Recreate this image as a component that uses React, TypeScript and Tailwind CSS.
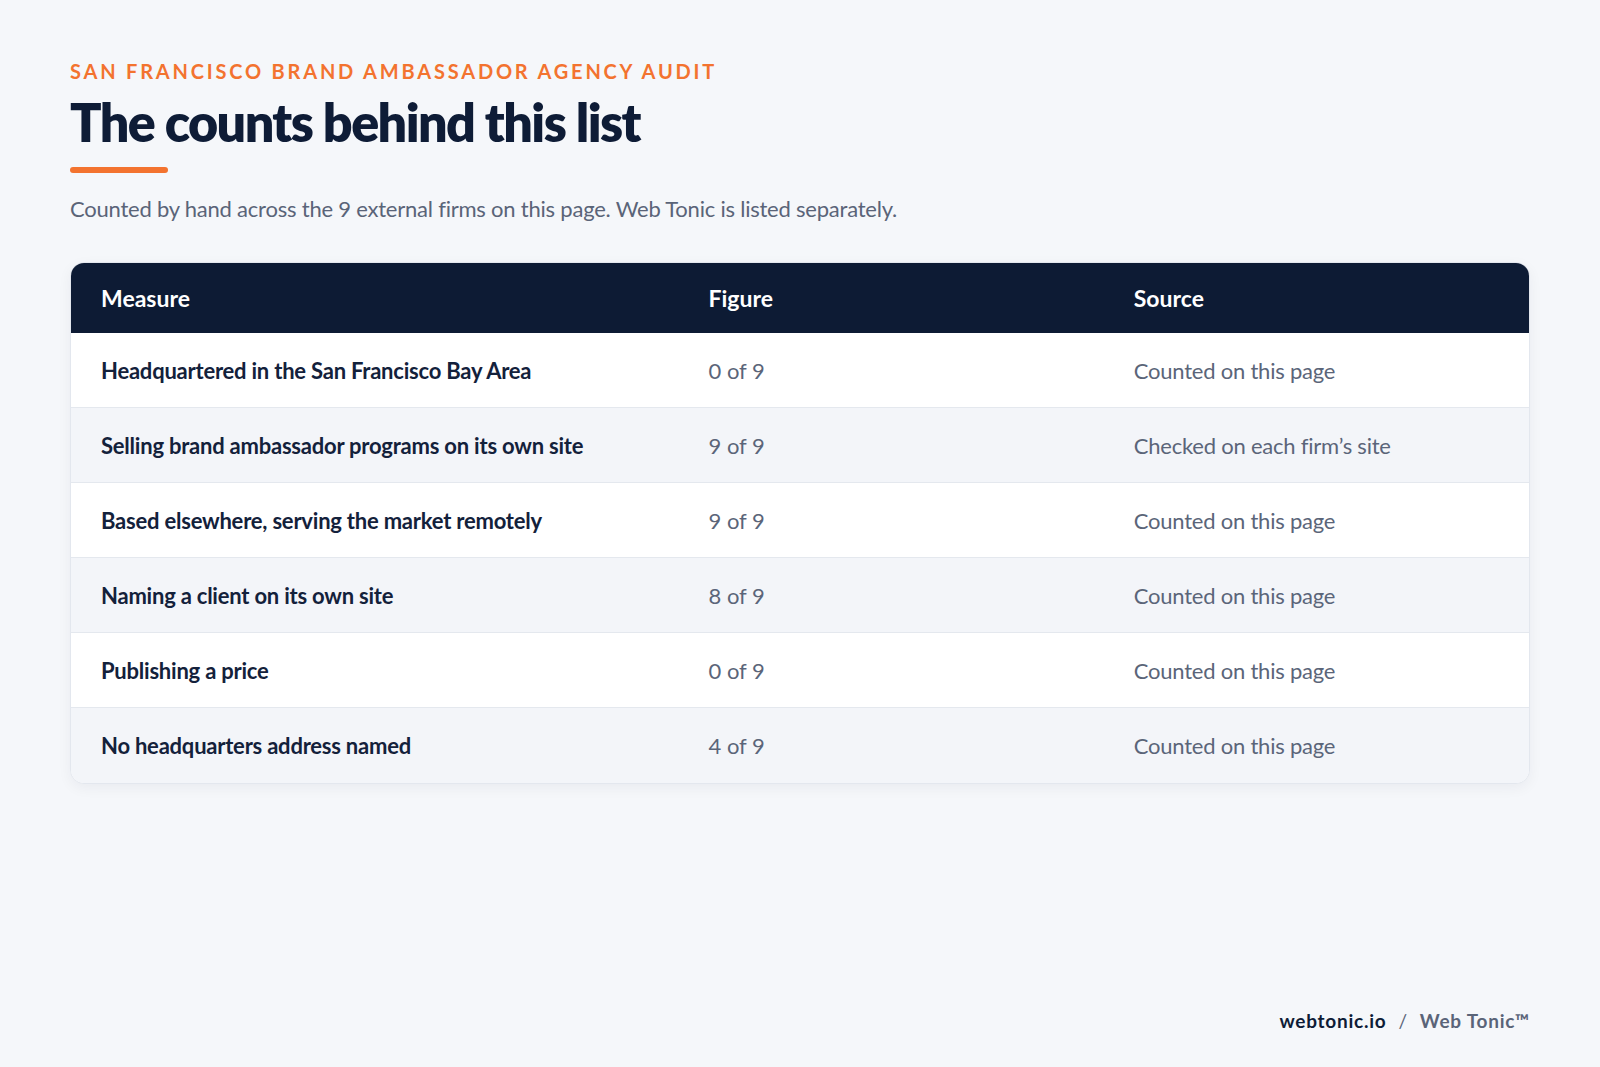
const rows = [
  { measure: "Headquartered in the San Francisco Bay Area", figure: "0 of 9", source: "Counted on this page" },
  { measure: "Selling brand ambassador programs on its own site", figure: "9 of 9", source: "Checked on each firm’s site" },
  { measure: "Based elsewhere, serving the market remotely", figure: "9 of 9", source: "Counted on this page" },
  { measure: "Naming a client on its own site", figure: "8 of 9", source: "Counted on this page" },
  { measure: "Publishing a price", figure: "0 of 9", source: "Counted on this page" },
  { measure: "No headquarters address named", figure: "4 of 9", source: "Counted on this page" },
];

export default function App() {
  return (
    <div className="min-h-screen h-[1067px] bg-[#f5f7fa] px-[70px] pt-[59px] flex flex-col font-['Lato','Noto_Sans',sans-serif]">
      <p className="text-[20px] leading-[24px] font-bold tracking-[0.14em] text-[#f3732f] uppercase">
        San Francisco Brand Ambassador Agency Audit
      </p>
      <h1 className="mt-[10px] text-[52px] leading-[58px] font-extrabold tracking-[-0.03em] text-[#0e1c36]">
        The counts behind this list
      </h1>
      <div className="mt-[16px] h-[6px] w-[98px] rounded-full bg-[#f3732f]" />
      <p className="mt-[21px] text-[22px] leading-[30px] text-[#5a6478] tracking-[-0.01em]">
        Counted by hand across the 9 external firms on this page. Web Tonic is listed separately.
      </p>

      <div className="mt-[38px] rounded-[14px] border border-[#e3e7ee] bg-white overflow-hidden shadow-[0_4px_14px_rgba(15,28,54,0.05)]">
        <div className="grid grid-cols-[10fr_7fr_7fr] h-[70px] items-center bg-[#0d1b34] text-white text-[23px] font-bold">
          <div className="pl-[30px]">Measure</div>
          <div className="pl-[30px]">Figure</div>
          <div className="pl-[30px]">Source</div>
        </div>
        {rows.map((row, i) => (
          <div
            key={i}
            className={`grid grid-cols-[10fr_7fr_7fr] items-center h-[75px] text-[22px] ${
              i % 2 === 1 ? "bg-[#f3f5f9]" : "bg-white"
            } ${i < rows.length - 1 ? "border-b border-[#e4e8ee]" : "h-[74px]"}`}
          >
            <div className="pl-[30px] font-bold text-[#13213b] tracking-[-0.01em]">{row.measure}</div>
            <div className="pl-[30px] text-[#5b6579]">{row.figure}</div>
            <div className="pl-[30px] text-[#5b6579] tracking-[-0.01em]">{row.source}</div>
          </div>
        ))}
      </div>

      <div className="mt-auto mb-[32px] flex justify-end items-baseline gap-[12px] text-[19px] font-bold tracking-[0.04em]">
        <span className="text-[#0e1c36]">webtonic.io</span>
        <span className="text-[#5a6478] font-normal">/</span>
        <span className="text-[#5a6478]">Web Tonic™</span>
      </div>
    </div>
  );
}
